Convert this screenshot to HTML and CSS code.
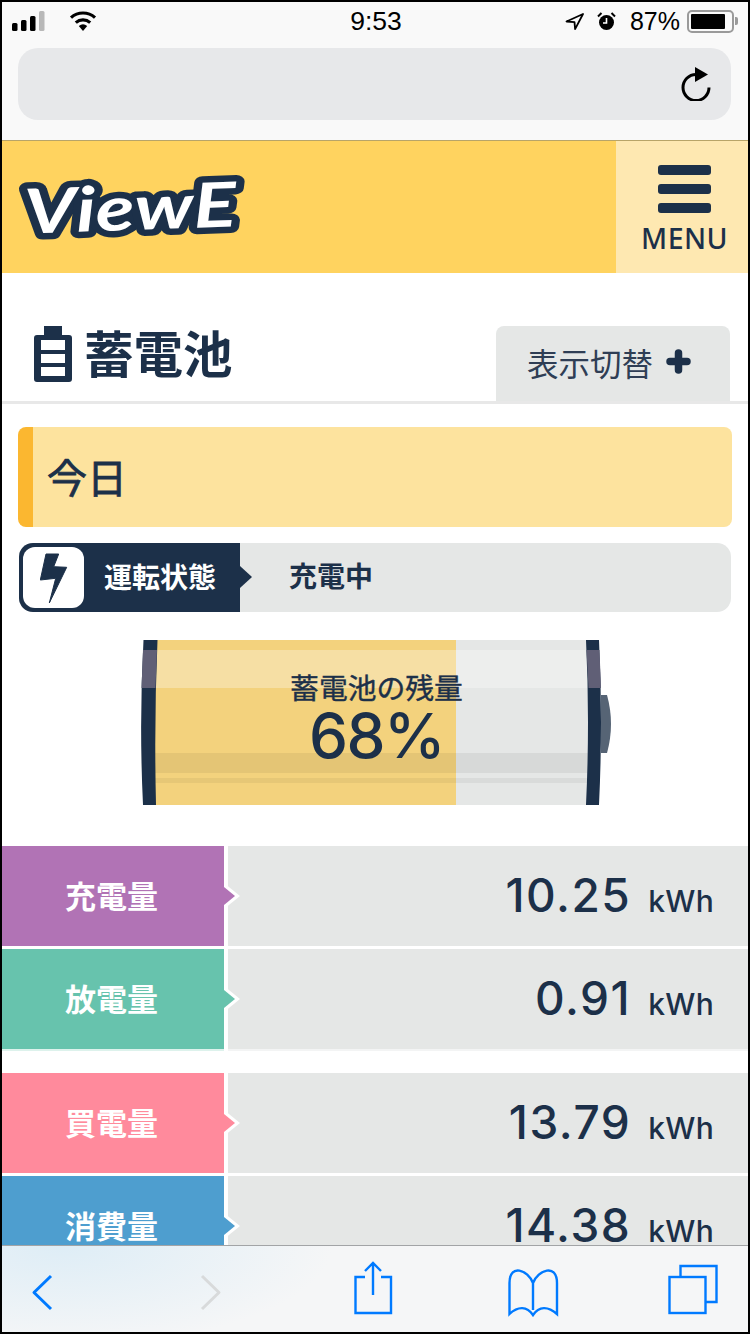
FILE: index.html
```html
<!DOCTYPE html>
<html>
<head>
    <title>ViewE</title>
    <link rel="stylesheet" href="styles.css">
</head>
<body>
    <div class="phone">
        <div class="browser-top">
            <div class="status-bar">
                <div class="status-left">
                    <svg class="signal" width="33" height="20" viewBox="0 0 33 20">
                        <rect x="0" y="12" width="5.500" height="8" rx="1.500" fill="#000"/>
                        <rect x="9" y="9" width="5.500" height="11" rx="1.500" fill="#000"/>
                        <rect x="18" y="5" width="5.500" height="15" rx="1.500" fill="#000"/>
                        <rect x="27" y="0" width="5.500" height="20" rx="1.500" fill="#b8b8b8"/>
                    </svg>
                    <svg class="wifi" width="28" height="20" viewBox="0 0 28 20">
                        <path d="M14 20l-4.200-5a6.500 6.500 0 0 1 8.400 0z" fill="#000"/>
                        <path d="M6.800 11.600a11 11 0 0 1 14.400 0" fill="none" stroke="#000" stroke-width="3.200"/>
                        <path d="M2 6.600a18 18 0 0 1 24 0" fill="none" stroke="#000" stroke-width="3.200"/>
                    </svg>
                </div>
                <div class="status-time">9:53</div>
                <div class="status-right">
                    <svg width="19" height="17" viewBox="0 0 19 17">
                        <path d="M18 1L1.500 8.500l8 .6.6 7z" fill="none" stroke="#000" stroke-width="1.800" stroke-linejoin="round"/>
                    </svg>
                    <svg class="alarm" width="19" height="19" viewBox="0 0 19 19">
                        <circle cx="9.500" cy="10.500" r="7.500" fill="#000"/>
                        <path d="M9.500 6v5H6" fill="none" stroke="#fff" stroke-width="1.600"/>
                        <path d="M1 4.500L4.500 1M18 4.500L14.500 1" stroke="#000" stroke-width="2"/>
                    </svg>
                    <span class="status-pct">87%</span>
                    <div class="status-batt"><div class="status-batt-fill"></div></div>
                    <div class="status-batt-nub"></div>
                </div>
            </div>
            <div class="url-bar">
                <svg width="30" height="34" viewBox="0 0 30 34">
                    <path d="M15 7.500A13 13 0 1 0 28 20.500" fill="none" stroke="#000" stroke-width="3"/>
                    <path d="M14 0l13 7.500-13 7.500z" fill="#000"/>
                </svg>
            </div>
        </div>

        <header class="site-header">
            <svg class="logo" width="240" height="80" viewBox="0 0 240 80">
                <text class="logo-text" x="14" y="64" textLength="212" lengthAdjust="spacingAndGlyphs" transform="rotate(-2 120 40)">ViewE</text>
            </svg>
            <div class="menu-btn">
                <span class="menu-bar"></span>
                <span class="menu-bar"></span>
                <span class="menu-bar"></span>
                <span class="menu-label">MENU</span>
            </div>
        </header>

        <div class="page-title">
            <h1>
                <svg width="38" height="56" viewBox="0 0 38 56">
                    <path d="M10 0h18v9h7a3 3 0 0 1 3 3v41a3 3 0 0 1-3 3H3a3 3 0 0 1-3-3V12a3 3 0 0 1 3-3h7z" fill="#1c3049"/>
                    <rect x="7" y="14" width="24" height="10" fill="#fff"/>
                    <rect x="7" y="28" width="24" height="9" fill="#fff"/>
                    <rect x="7" y="41" width="24" height="9" fill="#fff"/>
                </svg>
                <span class="title-text">蓄電池</span>
            </h1>
            <div class="switch-tab">
                表示切替
                <svg width="25" height="25" viewBox="0 0 25 25">
                    <path d="M12.500 4v17M4 12.500h17" fill="none" stroke="#1c3049" stroke-width="7.500" stroke-linecap="round"/>
                </svg>
            </div>
        </div>

        <div class="today">今日</div>

        <div class="run-state">
            <div class="run-label">
                <div class="run-icon">
                    <svg width="28" height="50" viewBox="0 0 28 50">
                        <path d="M6 1H18.700L13.700 13.700L26.700 14.300L9.300 50L15.700 25.300L.3 27z" fill="#1c3049" stroke="#1c3049" stroke-width="1" stroke-linejoin="round"/>
                    </svg>
                </div>
                <span class="run-text">運転状態</span>
            </div>
            <div class="run-value">充電中</div>
        </div>

        <div class="battery">
            <svg width="471" height="165" viewBox="141 640 471 165">
                <path d="M601 695h6q8 29 0 58h-6z" fill="#566475"/>
                <rect x="155" y="640" width="301" height="165" fill="#f3d27d"/>
                <rect x="456" y="640" width="132" height="165" fill="#e5e7e6"/>
                <rect x="155" y="650" width="433" height="38" fill="#fff" fill-opacity="0.3"/>
                <rect x="155" y="753" width="433" height="20" fill="#000" fill-opacity="0.06"/>
                <rect x="155" y="778" width="433" height="5" fill="#000" fill-opacity="0.05"/>
                <path d="M143.500 640H157.500Q154 722 156 805H143Q139 722 143.500 640z" fill="#1c3049"/>
                <path d="M586 640H599Q603 722 599 805H586Q590 722 586 640z" fill="#1c3049"/>
                <path d="M143 650H157L155.500 688H141.500z" fill="#605f76"/>
                <path d="M586.500 650H599.500L601 688H588.500z" fill="#605f76"/>
            </svg>
            <div class="battery-text">
                <div class="battery-label">蓄電池の残量</div>
                <div class="battery-pct">68%</div>
            </div>
        </div>

        <div class="rows">
            <div class="row row-purple"><div class="row-label">充電量</div><div class="row-value"><b>10.25</b><small>kWh</small></div></div>
            <div class="row row-green"><div class="row-label">放電量</div><div class="row-value"><b>0.91</b><small>kWh</small></div></div>
        </div>
        <div class="rows rows-second">
            <div class="row row-pink"><div class="row-label">買電量</div><div class="row-value"><b>13.79</b><small>kWh</small></div></div>
            <div class="row row-blue"><div class="row-label">消費量</div><div class="row-value"><b>14.38</b><small>kWh</small></div></div>
        </div>

        <div class="toolbar">
            <svg width="746" height="87" viewBox="2 1245 746 87" fill="none" stroke="#007aff" stroke-width="2.400">
                <path d="M51 1276L34 1292.500L51 1309" stroke-width="3" stroke-linejoin="round"/>
                <path d="M202 1276L219 1292.500L202 1309" stroke="#d8dadb" stroke-width="3" stroke-linejoin="round"/>
                <path d="M365 1277H355.500V1313H391V1277H381"/>
                <path d="M373 1295V1263M365 1271L373 1263L381 1271"/>
                <path d="M533 1283C528 1270 509.500 1263 509.500 1283V1314C518 1306 527 1306 533 1315C539 1306 548 1306 557 1314V1283C557 1263 538 1270 533 1283V1310"/>
                <rect x="669.500" y="1277" width="36" height="36"/>
                <path d="M680.500 1277V1266H716.500V1302H706"/>
            </svg>
        </div>
    </div>
</body>
</html>
```

FILE: styles.css
```css
* {
    box-sizing: border-box;
}
body {
    margin: 0;
    font-family: "Noto Sans CJK JP", "Noto Sans", sans-serif;
    color: #1c3049;
    background: #fff;
}
.phone {
    position: relative;
    width: 750px;
    height: 1334px;
    border: 2px solid #000;
    overflow: hidden;
}

/* browser chrome */
.browser-top {
    height: 139px;
    background: #f9f9f9;
    border-bottom: 1px solid #b8a468;
}
.status-bar {
    display: flex;
    align-items: center;
    justify-content: space-between;
    height: 38px;
    padding: 0 10px 0 10px;
    position: relative;
}
.status-left {
    display: flex;
    align-items: center;
    gap: 24px;
}
.status-time {
    font-family: "Liberation Sans", sans-serif;
    font-size: 26.5px;
    position: absolute;
    left: 2px;
    right: 0;
    text-align: center;
    color: #000;
}
.status-right {
    display: flex;
    align-items: center;
    color: #000;
    font-family: "Liberation Sans", sans-serif;
    font-size: 25px;
}
.alarm {
    margin-left: 13px;
}
.status-pct {
    margin-left: 14px;
}
.status-batt {
    width: 47px;
    height: 23px;
    margin-left: 7px;
    border: 2px solid #9a9a9a;
    border-radius: 5px;
    padding: 2px;
}
.status-batt-fill {
    width: 87%;
    height: 100%;
    background: #000;
    border-radius: 1px;
}
.status-batt-nub {
    width: 3px;
    height: 8px;
    margin-left: 1px;
    background: #9a9a9a;
    border-radius: 0 2px 2px 0;
}
.url-bar {
    display: flex;
    align-items: center;
    justify-content: flex-end;
    height: 72px;
    margin: 8px 17px 0 16px;
    padding-right: 20px;
    background: #e7e8ea;
    border-radius: 20px;
}

/* site header */
.site-header {
    display: flex;
    justify-content: space-between;
    height: 132px;
    background: #ffd35f;
}
.logo {
    margin: 25px 0 0 8px;
}
.logo-text {
    font-family: Lato, sans-serif;
    font-style: italic;
    font-weight: 700;
    font-size: 62px;
    fill: #fff;
    stroke: #1c3049;
    stroke-width: 13px;
    stroke-linejoin: round;
    paint-order: stroke;
}
.menu-btn {
    display: flex;
    flex-direction: column;
    align-items: center;
    width: 132px;
    padding: 24px 0 0 5px;
    background: #fee8b1;
}
.menu-bar {
    width: 53px;
    height: 10px;
    margin-bottom: 9px;
    background: #1c3049;
    border-radius: 3px;
}
.menu-label {
    font-family: "Noto Sans", sans-serif;
    font-weight: 500;
    font-size: 28.5px;
    letter-spacing: 0.4px;
    line-height: 30px;
    margin-top: 1px;
}

/* page title */
.page-title {
    display: flex;
    justify-content: space-between;
    align-items: flex-end;
    height: 131px;
    padding: 0 18px 0 32px;
    border-bottom: 3px solid #e8e8e8;
}
.page-title h1 {
    display: flex;
    align-items: center;
    gap: 12px;
    margin: 0 0 19px;
    font-size: 49.5px;
    line-height: 56px;
    font-weight: 700;
}
.title-text {
    margin-top: -5px;
}
.switch-tab {
    display: flex;
    align-items: center;
    justify-content: center;
    gap: 13px;
    width: 234px;
    height: 75px;
    padding: 0 8px 4px 0;
    background: #e5e7e6;
    border-radius: 8px 8px 0 0;
    font-size: 31.5px;
    color: #2f3e55;
}

.today {
    height: 100px;
    margin: 23px 16px 0;
    padding-left: 14px;
    background: #fde39e;
    border-left: 15px solid #fbb730;
    border-radius: 8px;
    font-size: 40px;
    -webkit-text-stroke: 0.8px #1c3049;
    line-height: 98px;
}

.run-state {
    display: flex;
    height: 69px;
    margin: 16px 17px 0;
    background: #e5e7e6;
    border-radius: 14px;
}
.run-label {
    position: relative;
    display: flex;
    align-items: center;
    width: 221px;
    background: #1c3049;
    border-radius: 14px 0 0 14px;
    color: #fff;
    font-size: 28px;
    font-weight: 700;
    padding-left: 4px;
}
.run-label::after {
    content: "";
    position: absolute;
    left: 100%;
    top: 23px;
    border-left: 12px solid #1c3049;
    border-top: 11px solid transparent;
    border-bottom: 11px solid transparent;
}
.run-icon {
    display: flex;
    align-items: center;
    justify-content: center;
    width: 61px;
    height: 61px;
    margin-right: 20px;
    background: #fff;
    border-radius: 12px;
}
.run-text {
    margin-top: -4px;
}
.run-value {
    padding-left: 49px;
    font-size: 28px;
    font-weight: 700;
    line-height: 65px;
}

/* battery gauge */
.battery {
    display: grid;
    width: 471px;
    height: 165px;
    margin: 28px 0 0 139px;
}
.battery svg,
.battery-text {
    grid-area: 1 / 1;
}
.battery-text {
    text-align: center;
    padding-top: 29px;
}
.battery-label {
    font-size: 28.8px;
    -webkit-text-stroke: 0.4px #1c3049;
    line-height: 36px;
}
.battery-pct {
    font-family: Inter, sans-serif;
    font-size: 62px;
    font-weight: 500;
    letter-spacing: -1.5px;
    line-height: 62px;
}

/* data rows */
.rows {
    display: flex;
    flex-direction: column;
    gap: 3px;
    margin-top: 41px;
}
.rows-second {
    margin-top: 24px;
}
.row {
    display: flex;
    gap: 4px;
    height: 100px;
}
.row-label {
    position: relative;
    width: 222px;
    padding-right: 3px;
    text-align: center;
    color: #fff;
    font-size: 31px;
    font-weight: 700;
    line-height: 98px;
}
.row-label::before,
.row-label::after {
    content: "";
    position: absolute;
    top: 50%;
    left: 100%;
    transform: translateY(-50%);
}
.row-label::before {
    z-index: 1;
    border-left: 16px solid #fff;
    border-top: 13px solid transparent;
    border-bottom: 13px solid transparent;
}
.row-label::after {
    z-index: 2;
    border-left: 11px solid currentColor;
    border-top: 9px solid transparent;
    border-bottom: 9px solid transparent;
}
.row-purple .row-label { background: #b173b5; }
.row-green .row-label { background: #67c3ad; box-shadow: 0 2px 0 #ddf2ec; }
.row-pink .row-label { background: #ff8a9c; }
.row-blue .row-label { background: #4e9ecf; }
.row-purple .row-label::after { color: #b173b5; }
.row-green .row-label::after { color: #67c3ad; }
.row-pink .row-label::after { color: #ff8a9c; }
.row-blue .row-label::after { color: #4e9ecf; }
.row-green .row-value {
    box-shadow: 0 2px 0 #f3f4f4;
}
.row-value {
    flex: 1;
    display: flex;
    justify-content: flex-end;
    align-items: baseline;
    gap: 17px;
    padding-right: 34px;
    background: #e5e7e6;
    font-family: Inter, sans-serif;
    line-height: 98px;
}
.row-value b {
    font-size: 46px;
    font-weight: 500;
    letter-spacing: 1.5px;
}
.row-value small {
    font-size: 30px;
    font-weight: 500;
    letter-spacing: 0.3px;
}

/* safari toolbar sits over the scrolled page */
.toolbar {
    position: absolute;
    left: 0;
    bottom: 0;
    width: 746px;
    height: 87px;
    background:
        radial-gradient(ellipse 270px 100px at 60px 0, #deedf6 0%, rgba(222, 237, 246, 0) 100%),
        #f5f6f7;
    border-top: 1px solid #a2a4a6;
}
.toolbar svg {
    display: block;
    margin-top: -1px;
}
```
